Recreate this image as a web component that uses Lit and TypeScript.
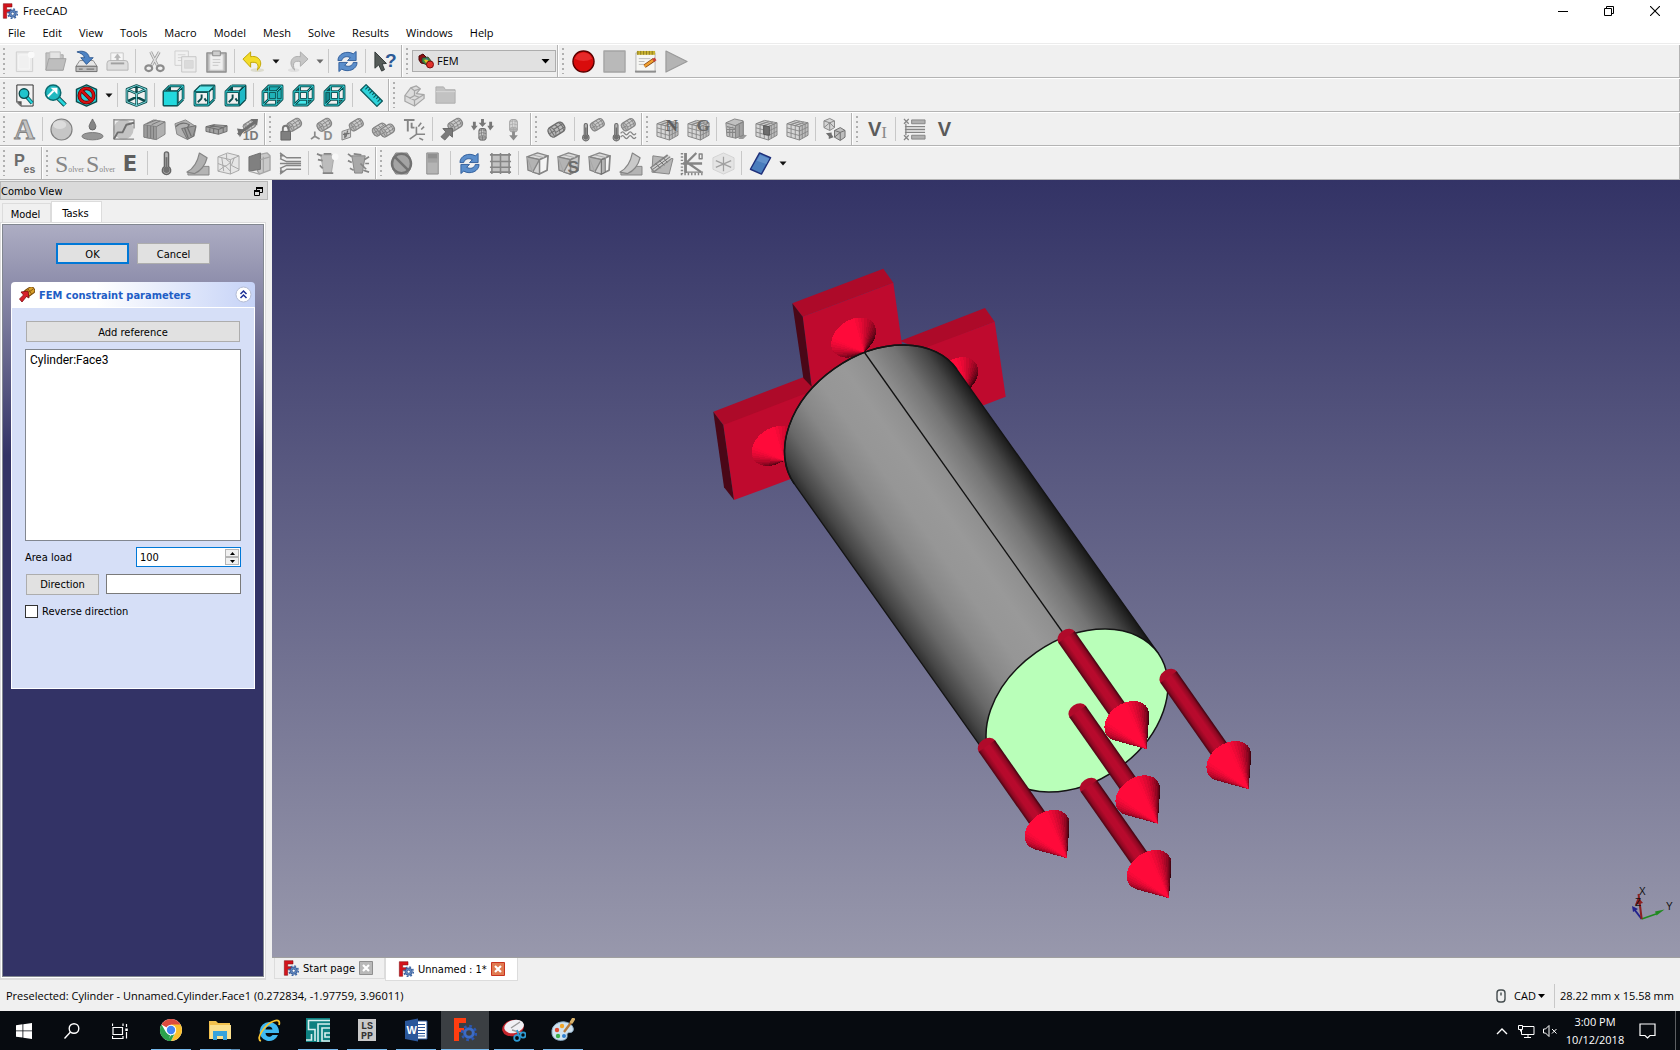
import { LitElement, html, css, svg, nothing } from "lit";
import { customElement } from "lit/decorators.js";

/* ---------- shared drawing helpers ---------- */

const icon = (body: unknown, size = 24, box = "0 0 24 24") =>
  html`<svg width=${size} height=${size} viewBox=${box} aria-hidden="true">${body}</svg>`;

const P = (pts: string, fill: string, stroke = "none", w = 1) =>
  svg`<polygon points=${pts} fill=${fill} stroke=${stroke} stroke-width=${w} stroke-linejoin="round"/>`;
const D = (d: string, stroke: string, w = 1, fill = "none") =>
  svg`<path d=${d} fill=${fill} stroke=${stroke} stroke-width=${w} stroke-linejoin="round"/>`;
const T = (x: number, y: number, size: number, text: string, fill = "#7d7d7d", fam = "Liberation Sans", weight = "bold") =>
  svg`<text x=${x} y=${y} font-size=${size} font-family=${fam} font-weight=${weight} fill=${fill}>${text}</text>`;

const G1 = "#c9c9c9";
const G2 = "#a6a6a6";
const G3 = "#858585";
const G4 = "#6f6f6f";

const barrel = (x: number, y: number, s = 1, fill = G1, line = G3, angle = -32) => svg`
  <g transform="translate(${x} ${y}) rotate(${angle}) scale(${s})">
    <rect x="-8" y="-5" width="16" height="10" rx="4" fill=${fill} stroke=${line} stroke-width="1.4"/>
    <ellipse cx="-5" cy="0" rx="3" ry="5" fill="#b4b4b4" stroke=${line}/>
    <path d="M-2 -1.5H8M-2 2H8M1 -5q2.500 5 0 10M5 -5q2.500 5 0 10M-8 0h6M-5 -5v10" fill="none" stroke=${line} stroke-width=".9"/>
  </g>`;

const meshCube = (extra: unknown = nothing) => svg`
  ${P("1,6 10,2.500 23,5 14,9", "#e0e0e0", G3)}
  ${P("1,6 14,9 14,23 1,19", "#d6d6d6", G3)}
  ${P("14,9 23,5 23,18 14,23", "#bcbcbc", G3)}
  ${D("M5.300 7v13.300M9.700 8v13.700M1 10.300l13 3.400M1 14.700l13 3.600M17 7.700v13.600M20 6.300v13.300M14 13.700l9-4.300M14 18.300l9-4.600M4 4.800l13 2.900M7 3.700l13 2.600M5.300 7l9-3.600M9.700 8l9-3.800", G3, 0.9)}
  ${extra}`;

const thermo = (x: number, y: number, s = 1) => svg`
  <g transform="translate(${x} ${y}) scale(${s})">
    <path d="M-2 -9a2 2 0 0 1 4 0V3a4 4 0 1 1 -4 0Z" fill="#b5b5b5" stroke="#666" stroke-width="1.300"/>
    <circle cx="0" cy="6" r="3" fill="#707070"/><path d="M0 -6V5" stroke="#707070" stroke-width="1.800"/>
  </g>`;

const clipBox = (extra: unknown = nothing, right = "#f4f4f4") => svg`
  ${P("1,5 12,1 23,4 14,8", "#dadada", G3, 1.3)}
  ${P("1,5 14,8 14,23 2,19", "#b3b3b3", G3, 1.3)}
  ${P("14,8 23,4 22,19 14,23", right, G3, 1.8)}
  ${P("14,8 14,23 7,21", "#d2d2d2", G3, 1.3)}
  ${D("M1 5l6 16M7 3l12 3", G2, 1)}
  ${extra}`;

const bend = (fill: string) => svg`${P("12,15 24,15 24,24 2,24 2,21", "#b4b4b4", G3)}
  ${D("M1 21Q11 16 14 1L22 6Q19 18 9 22.500Z", G3, 1.2, fill)}`;

const solver = svg`<text x="-1" y="21" fill="#868686" font-family="Liberation Sans Narrow" font-size="8"><tspan font-size="25">S</tspan><tspan>olver</tspan></text>`;

const wireBox = (a: unknown) => svg`
  ${a}
  <g fill="none" stroke="#0b4a4c" stroke-width="2.800" stroke-linejoin="round">
    <path d="M2 8h14v14H2zM8 2h14v14H8zM2 8l6-6M16 8l6-6M16 22l6-6M2 22l6-6"/></g>
  <g fill="none" stroke="#35dbe0" stroke-width=".9" stroke-linejoin="round">
    <path d="M2 8h14v14H2zM8 2h14v14H8zM2 8l6-6M16 8l6-6M16 22l6-6M2 22l6-6"/></g>`;
const solidBox = (face: string, shade = "#2ee0e6") => svg`
  <g fill="none" stroke="#0b4a4c" stroke-width="2.800" stroke-linejoin="round"><path d="M2 8h14v14H2zM8 2h14v14M8 2v6M2 8l6-6M16 8l6-6M16 22l6-6"/></g>
  <g fill="none" stroke="#35dbe0" stroke-width=".9"><path d="M2 8h14v14H2zM8 2h14v14M2 8l6-6M16 8l6-6M16 22l6-6"/></g>
  ${D("M5 19l4-4M12 15l2 3M9 11v4", "#0b4a4c", 2)}
  ${P(face, shade, "#0b4a4c", 1)}`;

const refresh = svg`
  <g fill="#5b8ecb" stroke="#2a5795" stroke-width=".9" stroke-linejoin="round">
    <path d="M2 11C2 4 11 0 18 4l3-2.500v9.500h-9l3-3C11 6 7 7 6 11Z"/>
    <path d="M22 13c0 7-9 11-16 7l-3 2.500V13h9l-3 3c4 2 8 1 9-3Z"/></g>`;

const warn = (size: number) => svg`<circle cx="12" cy="12" r=${size} fill="none" stroke="#6a0000" stroke-width="3.800"/><path d="M6.500 6.500L17.500 17.500" stroke="#6a0000" stroke-width="3.800"/>
  <circle cx="12" cy="12" r=${size} fill="none" stroke="#d81010" stroke-width="2.200"/>
  <path d="M6.500 6.500L17.500 17.500" stroke="#d81010" stroke-width="2.200"/>`;

const freecad = svg`
  <path d="M2 1h13v5H7v4h6v4H7v9H2Z" fill="#d4141c" stroke="#7d0a0e" stroke-width=".8"/>
  <circle cx="16" cy="16" r="5.500" fill="#5f88c4" stroke="#27477c"/>
  <circle cx="16" cy="16" r="7" fill="none" stroke="#3d67a8" stroke-width="2.400" stroke-dasharray="2.750 2.750"/>
  <circle cx="16" cy="16" r="2.300" fill="#fff" stroke="#27477c"/>`;

/* ---------- tool bar icons ---------- */

const icons: Record<string, unknown> = {
  "New": svg`${D("M3.500 2h17v20.500h-17z", "#cfcfcf", 1, "#ececec")}${D("M6 5h11v15H6z", "#f7f7f7", 1, "#f0f0f0")}<circle cx="19" cy="5" r="3.500" fill="#fafafa"/>`,
  "Open": svg`${D("M2 3h8l2 2h8v16H2z", "#a8a8a8", 1, "#c4c4c4")}${P("6,2 17,2 17,10 6,10", "#e4e4e4", "#bdbdbd")}${P("5,9 23,9 20,21 2,21", "#bebebe", "#a2a2a2")}`,
  "Save": svg`${P("5,11 19,11 23,17 1,17", "#e6e6e6", "#8c8c8c")}${D("M1 17h22v5.500H1z", "#6e6e6e", 1, "#bdbdbd")}${D("M12 20h8M4 20h4", "#7a7a7a", 1.2)}
    ${D("M2 2C8 0 14 2 15 8h4l-7 7-6-7h4C9 5 6 3 2 2Z", "#1f4b84", 0.8, "#4d83c4")}`,
  "Print": svg`${D("M5 3h13v11H5z", "#c8c8c8", 1, "#f6f6f6")}${D("M12 4l3 4h-2v4h-2V8H9z", "#b0b0b0", 0.5, "#b8b8b8")}${D("M1 14q0-3 3-3h16q3 0 3 3v7H1z", "#b4b4b4", 1, "#dedede")}${D("M5 14h14", "#a0a0a0", 2)}`,
  "Cut": svg`${D("M8 2l7 14M17 2L9 16", "#9a9a9a", 3)}${D("M8 2l7 14M17 2L9 16", "#e2e2e2", 1.4)}<g fill="none" stroke="#8c8c8c" stroke-width="2.200"><ellipse cx="6" cy="19" rx="3.600" ry="3" /><ellipse cx="18" cy="19" rx="3.600" ry="3"/></g>`,
  "Copy": svg`${D("M1 1h14v15H1z", "#cfcfcf", 1, "#f1f1f1")}${D("M4 5h8M4 8h6M4 11h6", "#d2d2d2")}${D("M8 7h15v16H8z", "#c6c6c6", 1, "#ececec")}${D("M11 11h9v8h-9z", "#d6d6d6", 1, "#dadada")}`,
  "Paste": svg`${D("M2 3h20v20H2z", "#8f8f8f", 1.4, "#b9b9b9")}${D("M5 5h14v16H5z", "#cfcfcf", 1, "#efefef")}${D("M8 1h8v5H8z", "#8a8a8a", 1, "#cdcdcd")}${D("M8 10h8M8 13h8M8 16h6", "#c8c8c8")}`,
  "Undo": svg`<ellipse cx="16" cy="21" rx="7" ry="2" fill="#dcdccf"/>${D("M9 2v5c10-2 14 8 7 14 2-6 0-9-7-8v5L1 9.500Z", "#c0a400", 1, "#f3dc2a")}`,
  "Redo": svg`<ellipse cx="8" cy="21" rx="6" ry="2" fill="#e0e0e0"/>${D("M15 2v5C5 5 2 15 9 21 6 13 9 11 15 12v5l8-7.500Z", "#ababab", 1, "#c6c6c6")}`,
  "Refresh": refresh,
  "What's this?": svg`${P("2,2 2,19 6,15.500 9,22 12,20.500 9.500,14.500 14,14", "#555b58", "#33393a")}${T(12.5, 17.5, 20, "?", "#2d5a96")}`,
  "Record macro": svg`<circle cx="12" cy="12" r="11" fill="#d90c0c" stroke="#5c0000" stroke-width="1.400"/><path d="M3 9a9.500 9.500 0 0 1 18 0q-9 5-18 0" fill="#e62a2a"/>`,
  "Stop macro": svg`${D("M1 1h22v22H1z", "#a4a4a4", 1.4, "#b9b9b9")}`,
  "Macros": svg`${D("M2 3h20v20H2z", "#b5b5b5", 1, "#f6f6f3")}${D("M1 22.500h22", "#8f8f8f", 2)}${D("M3 3h19", "#c9b230", 4)}${D("M4 1v4M7 1v4M10 1v4M13 1v4M16 1v4M19 1v4", "#8a7a20")}${D("M5 9h12M5 12h6M5 15h5", "#b9b9b9")}${D("M11 17l10-7", "#7a3d10", 4)}${D("M11 17l10-7", "#f0a030", 2.6)}${D("M20 11l2.500-1.800", "#c8403a", 3.4)}`,
  "Execute macro": svg`${P("1,1 23,12 1,23", "#b4b4b4", "#9a9a9a", 1.2)}`,

  "Fit all": svg`${D("M4 1h17v22H8l-4-4z", "#2c2c2c", 1, "#f2f2f2")}${P("4,18 9,18 9,23", "#555")}${D("M14 13l6 7", "#0c6a70", 4)}${D("M14 13l6 7", "#27d6dc", 2)}<circle cx="11.500" cy="10" r="5" fill="#20c4cc" stroke="#0b4a4c" stroke-width="1.400"/>`,
  "Fit selection": svg`${D("M14 14l8 8", "#0b4a4c", 5)}${D("M14 14l8 8", "#27d6dc", 3)}<circle cx="9.500" cy="9" r="8" fill="#1fb9c0" stroke="#0b6a6e" stroke-width="1.600"/>${D("M4 13l6-6", "#fff", 2)}${P("7,4 14,4 14,11", "#fff")}`,
  "Draw style": svg`${P("12,1 22.500,5.500 22.500,18.500 12,23 1.500,18.500 1.500,5.500", "#27cfd5", "#0b4a4c", 1.4)}${warn(7.5)}`,
  "Isometric": svg`<g fill="none" stroke-linejoin="round" stroke="#0b4a4c" stroke-width="2.600"><path d="M12 1.500l10 4v13l-10 4-10-4v-13zM12 10v12.500M2 5.500l10 4.500 10-4.500M12 1.500v12M2 18.500l10-5 10 5"/></g><g fill="none" stroke="#8af0f2" stroke-width=".9"><path d="M12 1.500l10 4v13l-10 4-10-4v-13zM12 10v12.500M2 5.500l10 4.500 10-4.500"/></g>`,
  "Front": solidBox("1.500,7.500 16,7.500 16,22.500 1.500,22.500", "#22d9de"),
  "Top": solidBox("1.500,8 7.500,2 22.500,2 16,8", "#5be6ea"),
  "Right": solidBox("16,8 22.500,1.500 22.500,16 16,22.500", "#1fb9c6"),
  "Rear": wireBox(P("8,2 22,2 22,16 8,16", "#1fb2b8")),
  "Bottom": wireBox(P("2,22 8,16 22,16 16,22", "#45e8ec")),
  "Left": wireBox(P("2,8 8,2 8,16 2,22", "#138a90")),
  "Measure": svg`<g transform="rotate(45 12 12)">${D("M0 8h24v8H0z", "#0b5a5e", 1.4, "#2ed3da")}${D("M3 8v4M6 8v3M9 8v4M12 8v3M15 8v4M18 8v3M21 8v4", "#0b5a5e", 1.2)}</g>`,
  "Part": svg`${P("2,12 8,4 14,2 18,5 14,10 22,11 22,15 12,23 2,18", "#dcdcdc", G2, 1.3)}${D("M2 12l10 5 10-6M12 17v6M8 4l4 3 6-2M12 7v5l-5 3M12 12l5 2", G2, 1.3)}`,
  "Group": svg`${D("M2 3h8l2 3h10v14H2z", "#adadad", 1, "#c2c2c2")}${D("M2 8h20", "#d8d8d8")}`,

  "Analysis": svg`<text x="1" y="22" font-size="30" font-family="Liberation Serif" font-weight="bold" fill="#c4c4c4" stroke="#828282">A</text>`,
  "Solid material": svg`<circle cx="12" cy="12" r="11" fill="#c6c6c6" stroke="#808080" stroke-width="1.200"/><ellipse cx="10" cy="7" rx="7" ry="4.500" fill="#dcdcdc"/>`,
  "Fluid material": svg`<ellipse cx="12" cy="19" rx="11" ry="3.800" fill="#969696" stroke="#777"/>${D("M12 1C14.500 6 15.500 7 15.500 9a3.500 3.500 0 0 1-7 0C8.500 7 9.500 6 12 1Z", "#666", 1, "#868686")}`,
  "Nonlinear": svg`<circle cx="12" cy="12" r="10.500" fill="#c4c4c4"/>${D("M2 1v21h21M2 2h21v9", G3, 1.3)}${D("M2 22l4-7h5l4-8 8-2", G4, 2)}`,
  "Reinforced": svg`${P("1,7 11,2 23,4 23,17 14,22.500 1,20", "#b0b0b0", G3)}${P("1,7 14,9 14,22.500 1,20", "#9c9c9c", G3)}${D("M4.500 7.500v13M8 8v13M11 8.500v13M14 9l9-5M4 6l10-4M9 7l9-4", "#777", 1)}`,
  "Cross-section": svg`${P("1,6 12,2 23,9 21,19 13,22 3,17", "#b2b2b2", G3)}${P("8,11 23,8 20,19 14,22.500", "#9a9a9a", G4)}${D("M11 10.500l4 11M14 10l4 9M2 9q6-6 14-2l-2 3", G4, 1.3)}`,
  "Plate": svg`${P("1,9 9,7 23,8 23,14 14,17 1,14", "#a2a2a2", G4)}${D("M1 9l13 3 9-4M14 12v5M5 10v5M9 11v5M5 8l14 2v5M10 7L5 10", G4, 1.1)}`,
  "Fluid section 1D": svg`${barrel(14, 8, 0.8)}${D("M2 17L20 4", G4, 3)}${P("15,1 23,1 22,8", G4)}${P("1,11 9,12 4,20", G4)}${T(7, 23, 13, "1D", "#7a7a7a")}`,
  "Fixed": svg`${barrel(16, 7, 0.95)}${D("M4 14v-3a3 3 0 0 1 6 0v3", "#777", 2)}${D("M2 14h10v9H2z", "#666", 1, "#7f7f7f")}`,
  "Displacement": svg`${barrel(15, 7, 0.95)}${D("M5 14v5l-4 3M5 19l5 3", "#8a8a8a", 1.8)}${T(14, 23, 13, "D", "#8c8c8c")}`,
  "Plane rotation": svg`${barrel(16, 7, 0.9)}${P("1,14 10,11 10,20 1,23", "#d0d0d0", G3)}${D("M4 15v6M7 13l-2 7M2 17l7-1", G4, 1.3)}`,
  "Contact": svg`${barrel(8, 12, 0.95)}${barrel(16, 13, 0.95)}`,
  "Transform": svg`${D("M1 2h11M5 2v12M9 5v5h3", G3, 2)}${D("M14 9v8l-7 5M14 17h9M16 9l3-4M19 12l3-3M17 21l4 2", G3, 1.7)}`,
  "Force": svg`${barrel(16, 7, 0.95)}${P("3,11 13,11 13,20 10,17.500 5,23 1,19.500 6,14.500", "#7a7a7a", "#666")}`,
  "Pressure": svg`${barrel(12, 17, 0.75, G1, G4, -90)}<g fill="#777"><path d="M10.500 1h3v4h2.500l-4 4.500-4-4.500h2.500zM2 4h3v4h2l-4 5-3-5h2zM19 4h3v4h2l-4 5-3-5h2z"/></g>`,
  "Self weight": svg`${barrel(12, 8, 0.8, "#d9d9d9", G2, -90)}${P("10.500,14 13.500,14 13.500,18 16.500,18 12,23.500 7.500,18 10.500,18", "#8c8c8c")}`,
  "Bearing": svg`${barrel(12, 12, 1.1, "#bcbcbc", G4)}`,
  "Temperature on body": svg`${thermo(4, 15, 0.85)}${barrel(16, 7, 0.9)}`,
  "Heat flux": svg`${thermo(3.500, 15, 0.85)}${barrel(16, 7, 0.9)}${D("M8 16q2-3 4 0t4 0 4 0 4 0M8 20q2-3 4 0t4 0 4 0 4 0", G3, 1.3)}`,
  "Netgen mesh": meshCube(T(10, 14, 18, "N", "#5e5e5e", "Liberation Serif")),
  "Gmsh mesh": meshCube(T(10, 14, 18, "G", "#6a6a6a", "Liberation Serif")),
  "Boundary layer": svg`${P("15,22 18,17 24,18 20,22", "#9a9a9a")}${P("2,5 11,1 20,3 20,18 12,21 3,19", "#c0c0c0", G3)}${P("12,8 20,4 20,18 12,21", "#a2a2a2", G3)}${D("M2 5l10 3 8-4M3 9l9 2M3 12h9M3 15h9M6 9v10M9 9v11M16 6v13", G3, 1.1)}`,
  "Mesh region": meshCube(P("9,8 15,9 15,18 9,17", "#6e6e6e", "#555")),
  "Mesh group": meshCube(),
  "FEM mesh to mesh": svg`${P("1,3 7,0.500 12,3 12,10 7,13 1,10", "#d4d4d4", G3)}${D("M1 3l6 2 5-2M7 5v8M1 10l6-5 5 5", G3)}${P("12,13 18,10 23,13 23,20 18,23.500 12,20", "#bdbdbd", G4)}${D("M12 13l6 2 5-2M18 15v8M12 20l6-5", G4)}${P("3,16 9,15 9,17 11,20 6,22 6,19", G4)}`,
  "Vanishing": svg`${T(2, 19, 21, "V", "#5c5c5c")}${T(16, 21, 18, "I", "#8a8a8a", "Liberation Serif", "normal")}`,
  "Flow resistance": svg`${D("M9 2h14v4H9zM9 18h14v4H9z", G3, 1, "#b0b0b0")}${D("M2 9h21M2 12h21M2 15h21", G3, 1.4)}${D("M1 1l5 5M6 1L1 6M1 18l5 5M6 18l-5 5M3 6v12", G3, 1.3)}`,
  "Velocity": T(4, 19, 21, "V", "#5a5a5a"),

  "Presentation": svg`${T(1, 15, 17, "P", "#6c6c6c")}${T(11, 22, 11, "es", "#6c6c6c")}`,
  "Solver CalculiX": solver,
  "Solver Z88": solver,
  "Elmer": T(5, 20, 22, "E", "#5e5e5e", "DejaVu Sans"),
  "Temperature": thermo(12, 12, 1.1),
  "Mechanical": bend("#b0b0b0"),
  "Mesh wire": svg`${P("1,5 11,1 23,4 23,19 14,23 1,20", "#e6e6e6", G2)}${D("M14 8v15M1 5l13 3 9-4M5 6l2 14M10 2v6l4 3-5 4 5 5M1 12l8 3M18 6l-3 8 8 4M1 20l8-6", G2, 1)}`,
  "Section view": svg`${P("10,3 20,1 23,4 23,19 12,23 10,20", "#c9c9c9", G2, 1.4)}${P("1,5 13,1 13,18 1,20", "#808080", G4)}${D("M13 8l10-3M16 5v16M1 20l11 3", G2, 1.3)}`,
  "Flow": svg`${D("M1 1l7 5h15M1 7l7 3h15M1 12h22M1 17l7-3h15M1 23l7-5h15M2 1v6M2 17v6M1 4h5M1 20h5", G3, 1.5)}`,
  "Fluid boundary": svg`${P("5,3 19,3 16,22 8,22", "#bcbcbc", G2)}${D("M1 2l5 2M2 8l5 1M4 14l3 3M8 2h8M7 22h11", G3, 1.8)}<circle cx="20" cy="5" r="3.500" fill="#f8f8f8"/>`,
  "Fluid constraint": svg`${P("5,4 19,4 16,22 8,22", "#a8a8a8", G3)}${D("M1 2l4 3M1 9l4 2M3 17l4 2M7 2l8 1M18 8l5-3M19 12h4M17 19l6 2M14 12l6 6", G3, 1.8)}`,
  "Purge results": svg`${D("M6 1h12l3 5v12l-3 5H6l-3-5V6z", G3, 1, "#a4a4a4")}<circle cx="12" cy="12" r="10" fill="none" stroke="#717171" stroke-width="2.400"/>${D("M5 5l14 14", "#717171", 2.6)}`,
  "Show result": svg`${D("M6 1h12v22H6z", "#8c8c8c", 1, "#b4b4b4")}${D("M7 2h10v5H7z", "none", 0, "#909090")}${D("M7 7h10v4H7z", "none", 0, "#a2a2a2")}`,
  "Apply changes": refresh,
  "Pipeline": svg`${D("M3 3h18v18H3z", "none", 0, "#c2c2c2")}${D("M3 1v22M12 1v22M21 1v22M1 3h22M1 10h22M1 21h22M1 16h22", G3, 1.6)}`,
  "Clip filter": clipBox(),
  "Scalar clip": clipBox(T(11, 22, 18, "S", "#6c6c6c"), "#c9c9c9"),
  "Function cut": clipBox(P("14,8 18,7 18,21 14,23", "#b4b4b4", G4)),
  "Warp": bend("#c9c9c9"),
  "Data along line": svg`${P("3,4 24,7 20,23 2,21", "#b6b6b6", G3)}${D("M2 19L20 5", G3, 7)}${D("M3 18L21 5", "#d0d0d0", 4)}${D("M3 18L21 5M6 12l5 5M10 9l5 5M14 6l4 5", G4, 1)}`,
  "Linearized stress": svg`${D("M4 1v20h19", G3, 1.4)}${D("M5 1v21M2 12h20M5 12L16 1M8 12l13 9", G3, 2.4)}${D("M19 2h3v5h-3z", G3, 1.5)}<path d="M1 1v22h22" fill="none" stroke="#858585" stroke-width="2.500" stroke-dasharray="1.500 2"/>`,
  "Data at point": svg`${P("12,1 23,6 23,18 12,23 1,18 1,6", "#e4e4e4", "#d2d2d2")}${D("M12 5v15M4 9l16 7M20 9L4 16", "#a0a0a0", 1.3)}`,
  "Function": svg`${P("11,1 22.500,6 13,23 1.500,18", "#4a7dbd", "#1e2f7a", 1.5)}${P("11.500,3 21,7 18,12.500 8,9", "#6392cb")}`,
};

/** "|" draws a separator; a trailing "+" gives the button its own drop-down arrow. */
type Bar = string[] | "workbench";
const rows: Bar[][] = [
  [
    ["New", "Open", "Save", "Print", "|", "Cut", "Copy", "Paste", "|", "Undo+", "Redo+", "|", "Refresh", "|", "What's this?"],
    "workbench",
    ["Record macro", "Stop macro", "Macros", "Execute macro"],
  ],
  [
    ["Fit all", "Fit selection", "Draw style+", "|", "Isometric", "|", "Front", "Top", "Right", "|", "Rear", "Bottom", "Left", "|", "Measure"],
    ["Part", "Group"],
  ],
  [
    ["Analysis", "|", "Solid material", "Fluid material", "Nonlinear", "Reinforced", "Cross-section", "Plate", "Fluid section 1D"],
    ["Fixed", "Displacement", "Plane rotation", "Contact", "Transform", "|", "Force", "Pressure", "Self weight"],
    ["Bearing", "|", "Temperature on body", "Heat flux"],
    ["Netgen mesh", "Gmsh mesh", "|", "Boundary layer", "Mesh region", "Mesh group", "|", "FEM mesh to mesh"],
    ["Vanishing", "|", "Flow resistance", "Velocity"],
  ],
  [
    ["Presentation"],
    ["Solver CalculiX", "Solver Z88", "Elmer", "|", "Temperature", "Mechanical", "Mesh wire", "Section view", "Flow", "|", "Fluid boundary", "Fluid constraint"],
    ["Purge results", "Show result", "|", "Apply changes", "Pipeline", "|", "Clip filter", "Scalar clip", "Function cut", "Warp", "Data along line", "Linearized stress", "Data at point", "|", "Function+"],
  ],
];

const base = css`
  * { box-sizing: border-box; }
  svg { display: block; flex: none; }
  button, input, select { font: inherit; color: inherit; margin: 0; }
  button { border: 0; background: none; padding: 0; }
`;

@customElement("tool-bars")
class ToolBars extends LitElement {
  static styles = [base, css`
    :host { display: block; background: #f0f0f0; border-top: 1px solid #ececec; }
    .row { display: flex; height: 34px; border-top: 1px solid #fff; border-bottom: 1px solid #b4b4b4; }
    .bar { display: flex; align-items: center; padding-right: 1px; border-right: 1px solid #b4b4b4; border-left: 1px solid #fff; }
    .bar:first-child { border-left: 0; }
    .bar:last-child { flex: 1; }
    .grip { width: 9px; height: 26px; padding-left: 3px; }
    .grip::before { content: ""; display: block; width: 2px; height: 26px; background: repeating-linear-gradient(#b0b0b0 0 2px, transparent 2px 5px); }
    .tool { width: 31px; height: 30px; display: flex; align-items: center; justify-content: center; }
    .tool svg { overflow: visible; }
    .more { width: 13px; height: 30px; display: flex; align-items: center; justify-content: center; }
    .sep { width: 6px; height: 24px; padding-left: 2px; }
    .sep::before { content: ""; display: block; width: 1px; height: 24px; background: #c8c8c8; }
    .box { display: flex; align-items: center; width: 144px; height: 22px; padding: 0 5px; gap: 3px; border: 1px solid #adadad; background: #e1e1e1; }
    .box select { flex: 1; min-width: 0; appearance: none; border: 0; background: none; padding: 0; outline: 0; }
  `];

  private item(name: string) {
    if (name === "|") return html`<span class="sep"></span>`;
    const more = name.endsWith("+");
    const key = more ? name.slice(0, -1) : name;
    const tone = key === "Redo" ? "#6a6a6a" : "#111";
    return html`<button class="tool" aria-label=${key}>${icon(icons[key], 23)}</button>${more
      ? html`<button class="more" aria-label="${key} options"><svg width="8" height="5" viewBox="0 0 8 5"><path d="M0.500 0.500h7L4 4.500z" fill=${tone}/></svg></button>`
      : nothing}`;
  }

  private workbench() {
    return html`<label class="box">
      <svg width="16" height="16" viewBox="0 0 16 16" aria-hidden="true">
        <path d="M1 3l4-2 3 3v7l-5-1-2-3z" fill="#8c1010" stroke="#4c0505"/>
        <path d="M4 5l6-1 4 5-4 4-6-4z" fill="#3c8a3c" stroke="#333" stroke-width=".8"/>
        <path d="M6 7l3-1 2 3-3 1z" fill="#e0c02a"/><path d="M7 6l2-1 1 2z" fill="#2f62b5"/>
        <circle cx="12" cy="11.500" r="3.500" fill="#e0322c" stroke="#7d0a0a"/>
      </svg>
      <select aria-label="Workbench"><option>FEM</option></select>
      <svg width="9" height="5" viewBox="0 0 9 5"><path d="M0.500 0h8L4.500 4.500z" fill="#000"/></svg>
    </label>`;
  }

  render() {
    return rows.map(r => html`<div class="row">${r.map(b => html`<div class="bar" role="toolbar"><span class="grip"></span>${b === "workbench" ? this.workbench() : b.map(n => this.item(n))}</div>`)}</div>`);
  }
}

/* ---------- 3D view ---------- */

/** Direction of the projected disc's long and short axes. */
const U = [0.818, -0.575];
const V = [0.575, 0.818];
const at = (cx: number, cy: number, u: number, v: number) =>
  [cx + u * U[0] + v * V[0], cy + u * U[1] + v * V[1]] as const;
const pt = (p: readonly [number, number]) => `${p[0].toFixed(1)},${p[1].toFixed(1)}`;

const shade = (f: number, power: number) => {
  const a = [52, 2, 12];
  const b = [255, 10, 58];
  const k = Math.min(1, Math.pow(Math.max(0, f), power) * 1.08);
  return `rgb(${a.map((x, i) => Math.round(x + (b[i] - x) * k)).join(",")})`;
};

/** A cone seen from its tip side, shaded in facets. */
function cone(tx: number, ty: number, d: number, power = 0.8) {
  const [cx, cy] = at(tx, ty, 0, -d);
  const a = 24.5;
  const b = 17.5;
  const c0 = Math.min(0.98, b / d);
  const n = 40;
  const facets = Array.from({ length: n }, (_, i) => {
    const mid = ((i + 0.5) / n) * 360 - 180;
    return { mid, from: mid - 180 / n - 1, to: mid + 180 / n + 1 };
  }).sort((p, q) => Math.abs(q.mid) - Math.abs(p.mid));
  const rim = (deg: number) => {
    const r = ((deg - 90) * Math.PI) / 180;
    return at(cx, cy, a * Math.cos(r), b * Math.sin(r));
  };
  return svg`<g shape-rendering="crispEdges">${facets.map(f => {
    const c = Math.cos(((f.mid + 12) * Math.PI) / 180);
    return svg`<polygon points="${pt([tx, ty])} ${pt(rim(f.from))} ${pt(rim(f.to))}" fill=${shade((c0 + c) / (1 + c0), power)}/>`;
  })}</g>`;
}

function arrow(tx: number, ty: number) {
  const start = at(tx, ty, -1, -138);
  return svg`
    <g transform="translate(${start[0]} ${start[1]}) rotate(-35)">
      <ellipse rx="10" ry="7.200" fill="#b00a2a"/>
      <rect x="-10" y="0" width="20" height="106" fill="url(#shaft)"/>
    </g>
    ${cone(tx, ty, 34.6)}`;
}

@customElement("model-view")
class ModelView extends LitElement {
  static styles = [base, css`
    :host { display: block; min-height: 0; background: linear-gradient(#333366, #9898ac); border-bottom: 1px solid #a0a0a0; overflow: hidden; }
    .scene { width: 100%; height: 100%; }
    .axis { font: 10px "Liberation Sans", sans-serif; fill: #111; }
  `];

  render() {
    return html`<svg class="scene" viewBox="272 180 1408 777" preserveAspectRatio="xMidYMid slice" role="img" aria-label="Cylinder with constraints">
      <defs>
        <linearGradient id="body" gradientUnits="userSpaceOnUse" x1="794.2" y1="483.7" x2="956.8" y2="369.3">
          <stop offset="0" stop-color="#2c2c2c"/><stop offset=".05" stop-color="#464646"/>
          <stop offset=".14" stop-color="#686868"/><stop offset=".27" stop-color="#878787"/>
          <stop offset=".4" stop-color="#969696"/><stop offset=".54" stop-color="#999999"/>
          <stop offset=".67" stop-color="#8f8f8f"/><stop offset=".8" stop-color="#737373"/>
          <stop offset=".92" stop-color="#454545"/><stop offset="1" stop-color="#1a1a1a"/>
        </linearGradient>
        <linearGradient id="shaft">
          <stop offset="0" stop-color="#4a0412"/><stop offset=".14" stop-color="#8c0822"/>
          <stop offset=".35" stop-color="#b60a2c"/><stop offset=".62" stop-color="#b80a2d"/>
          <stop offset=".86" stop-color="#8a0821"/><stop offset="1" stop-color="#3c0310"/>
        </linearGradient>
      </defs>

      <polygon points="713.3,411.7 803.3,377.3 830,400 723.3,425" fill="#ad0a29"/>
      <polygon points="723.3,425 812,391 830,430 790,479.300 734,500" fill="#bf0a2e"/>
      <polygon points="713.3,411.7 723.3,425 734,500 724,487.3" fill="#4a0717"/>
      ${cone(784.3, 460.7, 18, 0.9)}

      <polygon points="900,341 985,308 994.7,321.7 922,350" fill="#ad0a29"/>
      <polygon points="994.7,321.7 1005.700,396.700 983,405.500 920,380 922,349" fill="#bf0a2e"/>
      ${cone(966.2, 392, 18, 0.9)}

      <polygon points="792.3,303.3 883.3,268.7 893.3,282.7 802.700,316.700" fill="#ad0a29"/>
      <polygon points="802.700,316.700 893.3,282.7 901.5,341 905,370 811.700,386.700" fill="#bf0a2e"/>
      <polygon points="792.3,303.3 802.7,316.7 811.7,386.7 803.3,378" fill="#4a0717"/>

      <path d="M794.2 483.7A99.4 71 -35.1 0 1 956.800 369.300L1158.300 653.300L995.700 767.700Z" fill="url(#body)" stroke="#141414" stroke-width="1.300"/>
      ${cone(864, 352.3, 18, 0.9)}
      <path d="M794.2 483.7A99.4 71 -35.1 0 1 956.800 369.300" fill="none" stroke="#141414" stroke-width="1.500"/>
      <path d="M864.500 352.500L1066 637" stroke="#111" stroke-width="1.300"/>
      <ellipse rx="99.4" ry="71" transform="translate(1077 710.500) rotate(-35.1)" fill="#b9ffb9" stroke="#141414" stroke-width="1.500"/>

      ${arrow(1067, 858.3)}${arrow(1169, 898.3)}${arrow(1157.7, 823.7)}${arrow(1146.7, 749.3)}${arrow(1248.7, 789.3)}

      <g fill="none" stroke-width="1.600">
        <path d="M1641.700 919L1634 909" stroke="#22228c" stroke-width="2"/>
        <path d="M1641.700 919L1656 914" stroke="#1f8a1f"/>
        <path d="M1641.700 919L1638.500 894" stroke="#8c1f1f" stroke-width="2"/>
      </g>
      <polygon points="1655,911.500 1664.500,909.500 1656.500,915.500" fill="#1f8a1f"/>
      <polygon points="1638,897 1643,903 1635,905" fill="#8c1f1f"/>
      <polygon points="1632,906 1638,909 1633,912" fill="#22228c"/>
      <text class="axis" x="1639" y="895">X</text>
      <text class="axis" x="1666" y="910">Y</text>
      <text class="axis" x="1635" y="906">Z</text>
    </svg>`;
  }
}

/* ---------- task panel ---------- */

@customElement("combo-view")
class ComboView extends LitElement {
  static styles = [base, css`
    :host { display: flex; flex-direction: column; padding: 1px 4px 1px 0; background: #f0f0f0; }
    .title { display: flex; align-items: center; justify-content: space-between; height: 19px; padding: 1px 4px 0 0; border: 1px solid #b8b8b8; background: #dadada; }
    .tabs { display: flex; align-items: flex-end; height: 22px; padding-left: 2px; }
    .tab { height: 19px; width: 49px; border: 1px solid #dcdcdc; border-bottom: 0; background: #f0f0f0; padding: 2px 2px 0 0; }
    .tab.on { height: 21px; width: 51px; background: #fff; }
    .frame { flex: 1; display: flex; margin-right: 2px; border: 1px solid #dcdcdc; border-bottom-width: 2px; background: #fff; padding: 1px; }
    .pane { flex: 1; border: 1px solid #828790; padding: 18px 8px; background: linear-gradient(#adadc3, #333366 230px); }
    .actions { display: flex; justify-content: center; gap: 8px; margin-bottom: 18px; }
    .btn { width: 73px; height: 21px; border: 1px solid #adadad; background: #e1e1e1; padding-top: 1px; }
    .btn.main { border: 2px solid #0078d7; }
    .btn.wide { width: auto; margin: 0 1px; }
    .head { display: flex; align-items: center; gap: 4px; height: 25px; padding: 0 3px 0 8px; border-radius: 4px 4px 0 0; background: linear-gradient(90deg, #fff 35%, #c6d3f7); color: #215dc6; font-weight: bold; white-space: nowrap; }
    .head span { flex: 1; padding-top: 1px; }
    .card { display: flex; flex-direction: column; height: 382px; padding: 13px; border: 1px solid #fff; background: #d6dff7; }
    .refs { height: 192px; margin: 7px 0 6px; border: 1px solid #828790; background: #fff; padding: 3px 2px; outline: 0; overflow: hidden; font: 12px/17px Roboto, "Open Sans", sans-serif; border-radius: 0; }
    .refs option { padding: 0 2px; min-height: 17px; }
    .line { display: flex; align-items: center; justify-content: space-between; height: 20px; margin-bottom: 7px; }
    .spin { display: flex; width: 105px; height: 20px; border: 1px solid #0078d7; background: #fff; padding: 1px; }
    .spin input { flex: 1; min-width: 0; border: 0; padding: 1px 2px 0; outline: 0; appearance: textfield; }
    .spin input::-webkit-inner-spin-button { appearance: none; }
    .steps { display: flex; flex-direction: column; width: 14px; }
    .steps button { flex: 1; display: flex; align-items: center; justify-content: center; border: 1px solid #b4b4b4; background: #f0f0f0; }
    .dir { width: 135px; height: 20px; border: 1px solid #7a7a7a; background: #fff; outline: 0; border-radius: 0; }
    .line .btn { margin-left: 1px; }
    .check { display: flex; align-items: center; gap: 4px; margin-top: 1px; height: 18px; }
    .check input { appearance: none; width: 13px; height: 13px; border: 1px solid #333; background: #fff; }
  `];

  render() {
    return html`
      <div class="title"><span>Combo View</span>
        <button aria-label="Float"><svg width="9" height="9" viewBox="0 0 9 9" fill="none" stroke="#000"><path d="M2.500 3V.500h6v5H6" /><path d="M2 1h7" stroke-width="2"/><path d="M.500 4.500h5v4h-5z" fill="#dadada"/><path d="M0 4h6" stroke-width="2"/></svg></button></div>
      <div class="tabs" role="tablist"><button class="tab" role="tab">Model</button><button class="tab on" role="tab" aria-selected="true">Tasks</button></div>
      <div class="frame"><div class="pane">
        <div class="actions"><button class="btn main">OK</button><button class="btn">Cancel</button></div>
        <div class="head">
          <svg width="16" height="16" viewBox="0 0 16 16" aria-hidden="true">
            <g transform="rotate(-35 10 5)"><rect x="5" y="1.500" width="11" height="7" rx="3" fill="#d8a02a" stroke="#7a4a08"/><path d="M8 2v6M11 2v6M6 5h9" stroke="#7a4a08" stroke-width=".7"/></g>
            <path d="M2 5l7-1 1 7-2.500-1.500L3 15 .500 12 4.500 8Z" fill="#d8202a" stroke="#7c0d10" stroke-width=".8"/>
          </svg>
          <span>FEM constraint parameters</span>
          <button aria-label="Collapse"><svg width="17" height="17" viewBox="0 0 17 17"><circle cx="8.500" cy="8.500" r="7.500" fill="#fff" stroke="#b4bcd4"/><path d="M5.500 8l3-3 3 3M5.500 12l3-3 3 3" fill="none" stroke="#1c2f96" stroke-width="1.500"/></svg></button>
        </div>
        <div class="card">
          <button class="btn wide">Add reference</button>
          <select class="refs" size="4" aria-label="References"><option>Cylinder:Face3</option></select>
          <div class="line"><label for="load">Area load</label>
            <span class="spin"><input id="load" type="number" value="100"><span class="steps">
              <button aria-label="Increase"><svg width="5" height="3"><path d="M0 3h5L2.500 0z"/></svg></button>
              <button aria-label="Decrease"><svg width="5" height="3"><path d="M0 0h5L2.500 3z"/></svg></button></span></span></div>
          <div class="line"><button class="btn">Direction</button><input class="dir" type="text" aria-label="Direction"></div>
          <label class="check"><input type="checkbox">Reverse direction</label>
        </div>
      </div></div>`;
  }
}

/* ---------- desktop task bar ---------- */

const apps: { name: string; art: unknown; run?: boolean; on?: boolean; multi?: boolean }[] = [
  { name: "Chrome", run: true, art: svg`<circle cx="12" cy="12" r="11" fill="#fff"/><path d="M12 12L2.500 6.500A11 11 0 0 1 21.500 6.500Z" fill="#dd4b3e"/><path d="M12 12V6.500h9.500A11 11 0 0 1 12 23l4.700-8.500Z" fill="#fbc02d"/><path d="M12 12l-2 11A11 11 0 0 1 2.500 6.500l4.800 8.200Z" fill="#2ba24c"/><path d="M12 17L16 15 12 23Q10 23 9 22.500Z" fill="#2ba24c"/><circle cx="12" cy="12" r="5.200" fill="#fff"/><circle cx="12" cy="12" r="4.200" fill="#4285f4"/>` },
  { name: "File Explorer", run: true, multi: true, art: svg`<path d="M1 3h7l2 2h12v16H1z" fill="#f2c14e"/><path d="M2 7h21v14H2z" fill="#fbe08e"/><path d="M5 13h14v9h-4v-4H9v4H5z" fill="#37a3dc"/>` },
  { name: "Internet Explorer", art: svg`<path d="M12 3a9.500 9.500 0 1 0 9 13h-5.500c-2 3-7 2-7-2h13.500C22.500 8 18.500 3 12 3ZM8.500 10.500c.500-4 6.500-4 7 0Z" fill="#3fb9f2"/><path d="M4 22C-2 20 8 5 17 2c5-2 6 1 5 4" fill="none" stroke="#f7c331" stroke-width="1.800"/>` },
  { name: "SPS", run: true, art: svg`<path d="M0 0h24v24H0z" fill="#0d8080"/><path d="M24 2.500H2.500v9H9V23M0 22h5.500v-6M12 24V6h12M24 10h-8v13h8M24 15h-5v4h5" fill="none" stroke="#d9efef" stroke-width="1.600"/>` },
  { name: "LS-PrePost", run: true, art: svg`<path d="M3 1h18v22H3z" fill="#c9c9c9"/><text x="6" y="11" font-size="10" font-weight="bold" font-family="Liberation Mono" fill="#333">LS</text><text x="6" y="21" font-size="10" font-weight="bold" font-family="Liberation Mono" fill="#333">PP</text>` },
  { name: "Word", run: true, art: svg`<path d="M12 3h11v18H12z" fill="#fff" stroke="#2b579a"/><path d="M14 6.500h7M14 9.500h7M14 12.500h7M14 15.500h7M14 18h7" stroke="#2b579a" stroke-width="1.200"/><path d="M1 3l13-2.500v23L1 21z" fill="#2b579a"/><text x="2.500" y="16" font-size="11" font-weight="bold" font-family="Liberation Sans" fill="#fff">W</text>` },
  { name: "FreeCAD", run: true, on: true, art: svg`<path d="M1 0h12v5H6v5h5v4H6v9H1Z" fill="#ff3d10"/><circle cx="16" cy="15" r="5.800" fill="#3c6bc4"/><circle cx="16" cy="15" r="6.800" fill="none" stroke="#2b57b0" stroke-width="2.800" stroke-dasharray="2.670 2.670"/><circle cx="16" cy="15" r="2.800" fill="#3c3e42"/>` },
  { name: "Snipping Tool", run: true, art: svg`<ellipse cx="11" cy="10" rx="11" ry="8" fill="#c4242c" transform="rotate(-15 11 10)"/><ellipse cx="12" cy="8.500" rx="10" ry="6.500" fill="#f0f0f4" transform="rotate(-15 12 8)"/><path d="M9 10l9-6M10 12l10 3" stroke="#999" stroke-width="1.400"/><g fill="none" stroke="#2d9bd4" stroke-width="1.800"><circle cx="15" cy="20" r="2.800"/><circle cx="21" cy="17" r="2.600"/><path d="M15 12l2 6"/></g>` },
  { name: "Paint", run: true, art: svg`<path d="M1 15C0 7 8 3 14 4c8 1 10 8 7 10-3 1-5 0-5 3 1 5-5 6-9 5s-6-4-6-7Z" fill="#cfe2f0" stroke="#8fb0c8"/><circle cx="6" cy="12" r="2.200" fill="#e24a30"/><circle cx="11" cy="8" r="2.200" fill="#f2a62a"/><circle cx="7" cy="18" r="2.200" fill="#3db04c"/><circle cx="13" cy="18" r="2" fill="#2f7fd0"/><path d="M13 14L22 2" stroke="#b5793a" stroke-width="2.400"/><path d="M20 5l3-5" stroke="#d8b26a" stroke-width="3.400"/>` },
];

@customElement("task-bar")
class TaskBar extends LitElement {
  static styles = [base, css`
    :host { display: flex; height: 40px; background: #070b10; color: #fff; }
    .slot { position: relative; width: 48px; display: flex; align-items: center; justify-content: center; }
    .apps { display: flex; gap: 1px; margin-left: 3px; }
    .apps .slot.run { border-bottom: 2px solid transparent; }
    .apps .slot.run::after { content: ""; position: absolute; left: 4px; right: 4px; bottom: -2px; height: 2px; background: #76b9ed; }
    .apps .slot.on { background: #3b3f43; }
    .apps .slot.on::after { left: 0; right: 0; }
    .apps .slot.multi::after { background: linear-gradient(90deg, #76b9ed 31px, #5a8cb4 31px); }
    .tray { margin-left: auto; display: flex; align-items: center; }
    .tray button { display: flex; align-items: center; justify-content: center; width: 24px; height: 40px; }
    .tray .clock { display: block; width: 66px; line-height: 18px; text-align: center; }
    .tray .note { width: 38px; margin-right: 9px; }
    .peek { width: 5px; height: 40px; border-left: 1px solid #5c5f62; }
  `];

  render() {
    return html`
      <button class="slot" aria-label="Start"><svg width="16" height="16" viewBox="0 0 16 16" fill="#fff"><path d="M0 2.200l6.500-.9v6.200H0zM7.300 1.200L16 0v7.500H7.300zM0 8.300h6.500v6.200L0 13.700zM7.300 8.300H16V16l-8.700-1.200z"/></svg></button>
      <button class="slot" aria-label="Search"><svg width="16" height="16" viewBox="0 0 16 16" fill="none" stroke="#fff" stroke-width="1.400"><circle cx="10" cy="5.500" r="4.800"/><path d="M6.500 9L.500 15.500"/></svg></button>
      <button class="slot" aria-label="Task view"><svg width="16" height="16" viewBox="0 0 16 16" fill="none" stroke="#fff" stroke-width="1.200"><path d="M1 4.500h9.500v7H1zM.500 3V.500M11 3V.500M.500 13v2.500h10.500V13M.500 1.200h0M14.500 1v3M14.500 9v6.500"/><path d="M13.300 5.500h2.500v2.500h-2.500z" fill="#fff" stroke="none"/></svg></button>
      <div class="apps">${apps.map(a => html`<button class="slot ${a.run ? "run" : ""} ${a.on ? "on" : ""} ${a.multi ? "multi" : ""}" aria-label=${a.name}>${icon(a.art, 24)}</button>`)}</div>
      <div class="tray">
        <button aria-label="Show hidden icons"><svg width="12" height="8" fill="none" stroke="#fff" stroke-width="1.400"><path d="M1 7l5-5 5 5"/></svg></button>
        <button aria-label="Network"><svg width="17" height="15" viewBox="0 0 17 15" fill="none" stroke="#fff"><path d="M5 2.500h11v8H3.500V6M10 10.500V13M6 13.500h7M.500 1.500h4v4h-4zM2.500 5.500v2"/></svg></button>
        <button aria-label="Volume"><svg width="15" height="12" viewBox="0 0 15 12" fill="none" stroke="#fff"><path d="M.500 4h2l3.500-3.500v11L2.500 8h-2zM9 4l4.500 4.500M13.500 4L9 8.500"/></svg></button>
        <button class="clock">3:00 PM<br>10/12/2018</button>
        <button class="note" aria-label="Notifications"><svg width="17" height="16" viewBox="0 0 17 16" fill="none" stroke="#fff" stroke-width="1.200"><path d="M1 1h15v11.500h-5L8.500 15 6 12.500H1z"/></svg></button>
        <span class="peek"></span>
      </div>`;
  }
}

/* ---------- window ---------- */

const menus = ["File", "Edit", "View", "Tools", "Macro", "Model", "Mesh", "Solve", "Results", "Windows", "Help"];

@customElement("app-root")
class AppRoot extends LitElement {
  static styles = [base, css`
    :host { display: flex; flex-direction: column; min-height: 100vh; background: #f0f0f0; color: #000; font: 11px/16px "Open Sans", "Noto Sans", sans-serif; }
    combo-view { font: 11px/15px "DejaVu Sans Condensed", "DejaVu Sans", sans-serif; width: 272px; }
    .caption { display: flex; align-items: center; height: 22px; padding: 0 2px; background: #fff; }
    .caption span { flex: 1; padding-left: 5px; }
    .caption button { width: 46px; height: 22px; display: flex; align-items: center; justify-content: center; }
    .menu { display: flex; height: 21px; background: #fff; }
    .menu button { padding: 0 9px 0 8px; }
    .work { flex: 1; display: flex; }
    .doc { flex: 1; min-width: 0; display: flex; flex-direction: column; }
    model-view { flex: 1; }
    .files { display: flex; align-items: flex-start; height: 23px; padding-left: 2px; font: 11px/15px "DejaVu Sans Condensed", "DejaVu Sans", sans-serif; }
    .file { display: flex; align-items: center; gap: 4px; height: 21px; padding: 0 11px 0 8px; border: 1px solid #dcdcdc; border-top: 0; white-space: nowrap; }
    .file.on { height: 23px; padding: 0 12px; background: #fff; }
    .status { display: flex; align-items: center; height: 30px; padding: 0 6px; }
    .status .msg { flex: 1; }
    .status .nav { display: flex; align-items: center; gap: 2px; padding-right: 9px; border-right: 1px solid #c8c8c8; height: 24px; }
    .status .nav svg:first-child { margin-right: 6px; }
    .status .size { padding-left: 5px; }
  `];

  private close(fill: string, edge: string) {
    return html`<button aria-label="Close tab"><svg width="14" height="14" viewBox="0 0 14 14"><path d="M.500.500h13v13H.500z" fill=${fill} stroke=${edge}/><path d="M4 4l6 6M10 4l-6 6" stroke="#fff" stroke-width="2.200"/></svg></button>`;
  }

  render() {
    return html`
      <div class="caption">${icon(freecad, 16)}<span>FreeCAD</span>
        <button aria-label="Minimize"><svg width="10" height="10" stroke="#000"><path d="M0 5.500h10"/></svg></button>
        <button aria-label="Restore"><svg width="10" height="10" viewBox="0 0 10 10" fill="none" stroke="#000"><path d="M.500 2.500h7v7h-7zM2.500 2V.500h7v7H8"/></svg></button>
        <button aria-label="Close"><svg width="10" height="10" viewBox="0 0 10 10" stroke="#000" stroke-width="1.100"><path d="M0 0l10 10M10 0L0 10"/></svg></button>
      </div>
      <nav class="menu">${menus.map(m => html`<button>${m}</button>`)}</nav>
      <tool-bars></tool-bars>
      <div class="work">
        <combo-view></combo-view>
        <div class="doc">
          <model-view></model-view>
          <div class="files">
            <div class="file">${icon(freecad, 16)}<span>Start page</span>${this.close("#b9b9b9", "#8f8f8f")}</div>
            <div class="file on">${icon(freecad, 16)}<span>Unnamed : 1*</span>${this.close("#e07a50", "#c8321e")}</div>
          </div>
        </div>
      </div>
      <div class="status">
        <span class="msg">Preselected: Cylinder - Unnamed.Cylinder.Face1 (0.272834, -1.97759, 3.96011)</span>
        <button class="nav"><svg width="10" height="14" viewBox="0 0 10 14" fill="none" stroke="#444c4e" stroke-width="1.400"><rect x="1" y="1" width="8" height="12" rx="3"/><path d="M5 3.500v3"/></svg>CAD<svg width="7" height="4"><path d="M0 0h7L3.500 4z"/></svg></button>
        <span class="size">28.22 mm x 15.58 mm</span>
      </div>
      <task-bar></task-bar>`;
  }
}
